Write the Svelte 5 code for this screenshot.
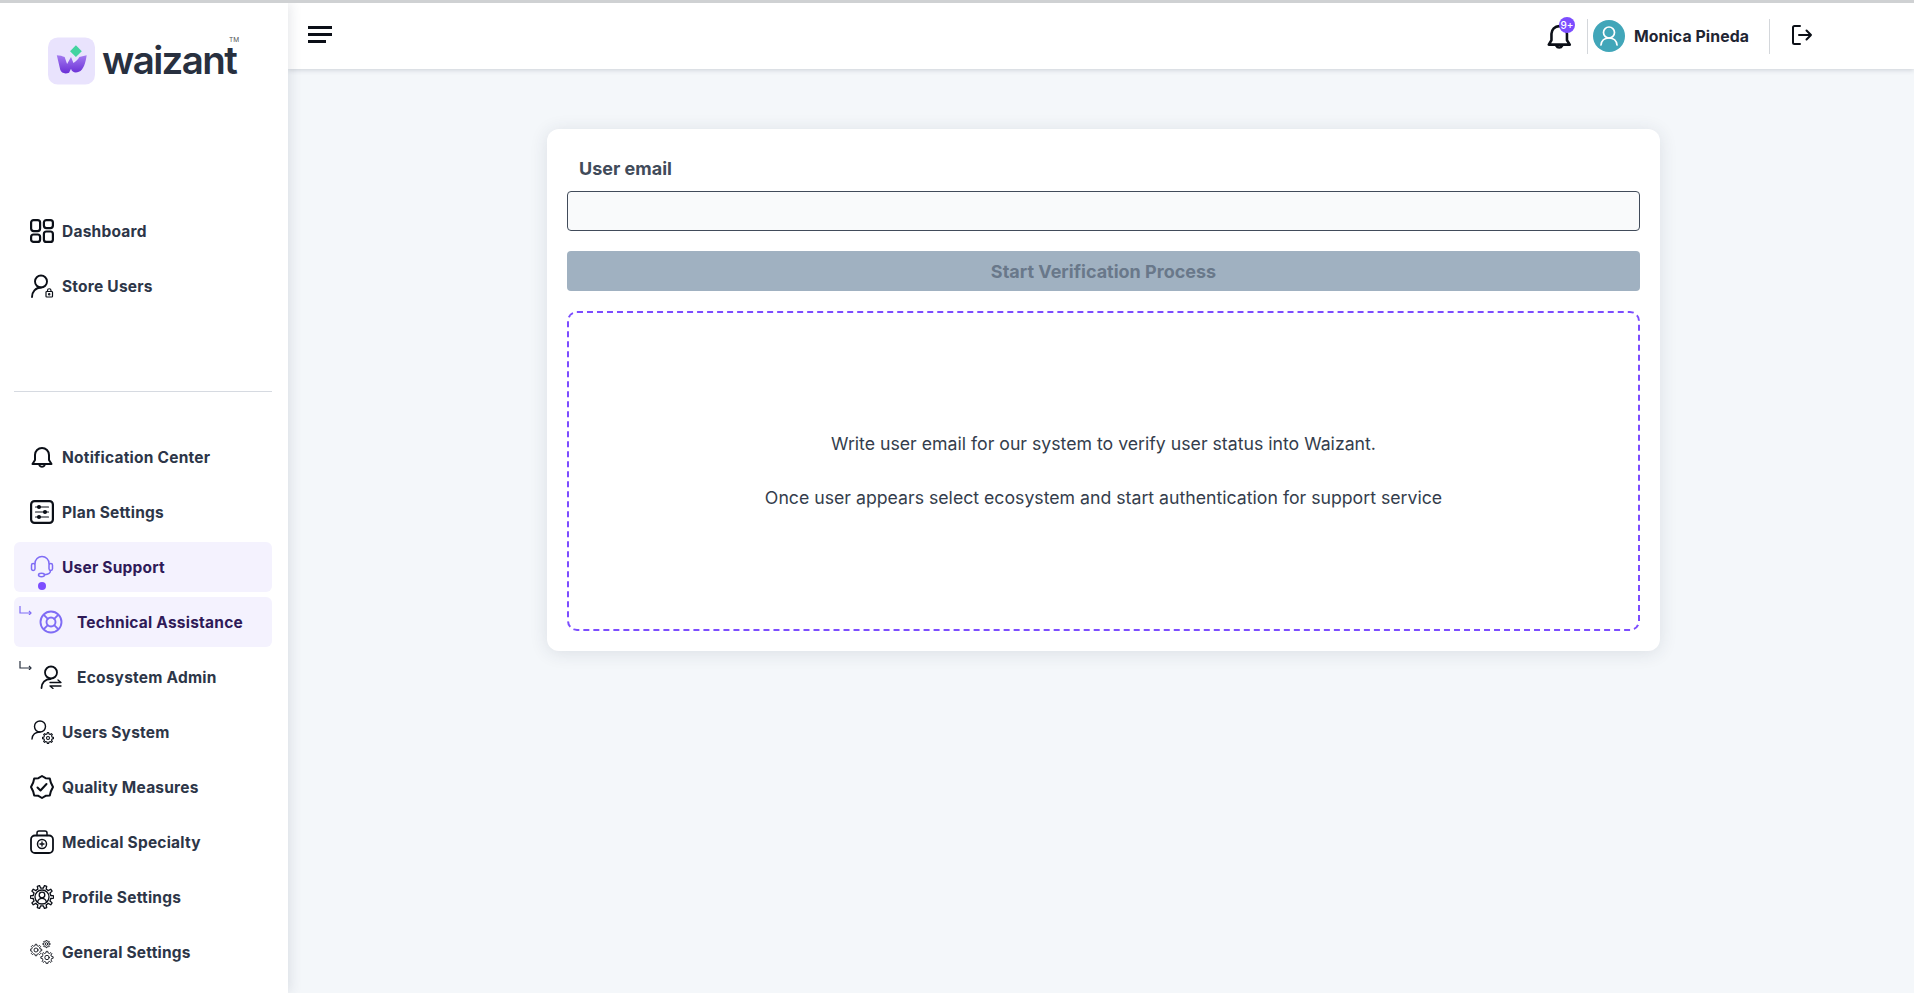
<script>
  const common = 'currentColor';
  const group1 = [
    { label: 'Dashboard', icon: 'dash' },
    { label: 'Store Users', icon: 'store' }
  ];
  const group2 = [
    { label: 'Notification Center', icon: 'bell' },
    { label: 'Plan Settings', icon: 'plan' },
    { label: 'User Support', icon: 'support', active: true, dot: true },
    { label: 'Technical Assistance', icon: 'life', active: true, sub: true },
    { label: 'Ecosystem Admin', icon: 'eco', sub: true },
    { label: 'Users System', icon: 'usergear' },
    { label: 'Quality Measures', icon: 'quality' },
    { label: 'Medical Specialty', icon: 'medical' },
    { label: 'Profile Settings', icon: 'profile' },
    { label: 'General Settings', icon: 'general' }
  ];

  // Outline of a cog with n teeth, centred on (cx, cy).
  function cog(cx, cy, r, n = 8) {
    const inner = r * 0.76;
    const pts = [];
    for (let i = 0; i < n; i++) {
      const step = (Math.PI * 2) / n;
      const a = i * step;
      [
        [inner, a - step * 0.5],
        [inner, a - step * 0.27],
        [r, a - step * 0.16],
        [r, a + step * 0.16],
        [inner, a + step * 0.27]
      ].forEach(([d, t]) => {
        pts.push(`${(cx + Math.cos(t) * d).toFixed(2)} ${(cy + Math.sin(t) * d).toFixed(2)}`);
      });
    }
    return `M${pts.join('L')}Z`;
  }
</script>

{#snippet icon(name)}
  <svg class="ico" viewBox="0 0 24 24" fill="none" stroke={common} stroke-width="1.5" stroke-linecap="round" stroke-linejoin="round">
    {#if name === 'dash'}
      <g stroke-width="2.200">
        <rect x="1.100" y="1.100" width="9" height="11" rx="2.500" />
        <rect x="13.900" y="1.100" width="9" height="8" rx="2.500" />
        <rect x="1.100" y="15.500" width="9" height="7.400" rx="2.500" />
        <rect x="13.900" y="12.500" width="9" height="10.400" rx="2.500" />
      </g>
    {:else if name === 'store'}
      <circle cx="11" cy="7.500" r="6" stroke-width="1.900" />
      <path d="M2 23c0-5 3.500-9.500 9-9.500" stroke-width="1.900" />
      <rect x="16" y="17.500" width="6.500" height="5.500" rx=".8" stroke-width="1.200" />
      <path d="M17.500 17.500v-1a1.700 1.700 0 0 1 3.500 0v1" stroke-width="1.200" />
      <circle cx="19.200" cy="20.200" r=".5" fill="currentColor" />
    {:else if name === 'bell'}
      <path d="M5 10a7 7 0 0 1 14 0v5l2.500 4h-19L5 15z" stroke-width="2" />
      <path d="M9.500 20.500a3 3 0 0 0 5 0" stroke-width="2" />
    {:else if name === 'plan'}
      <rect x="1.100" y="1.100" width="21.800" height="21.800" rx="3.500" stroke-width="2.200" />
      <path d="M5.500 7h13M5.500 12h13M5.500 17h13" stroke-width="1.200" />
      <circle cx="9" cy="7" r="1.300" fill="currentColor" />
      <circle cx="15" cy="12" r="1.300" fill="currentColor" />
      <circle cx="9" cy="17" r="1.300" fill="currentColor" />
    {:else if name === 'support'}
      <g stroke-width="1.500">
        <path d="M5 9V8.500a7 7 0 0 1 14 0V9" />
        <rect x="1.500" y="8.500" width="3.500" height="7" rx="1.700" />
        <rect x="19" y="8.500" width="3.500" height="7" rx="1.700" />
        <path d="M20.500 15.500c0 2.500-3 4-6 4.200" />
        <ellipse cx="11.500" cy="20" rx="3" ry="1.700" />
      </g>
    {:else if name === 'life'}
      <g stroke-width="1.900">
        <circle cx="12" cy="12" r="10.500" />
        <circle cx="12" cy="12" r="4.500" />
        <path d="M4.800 4.800l4 4M19.200 4.800l-4 4M4.800 19.200l4-4M19.200 19.200l-4-4" />
      </g>
    {:else if name === 'eco'}
      <circle cx="12" cy="7.500" r="6" stroke-width="1.800" />
      <path d="M2.500 23c0-5 3.500-9 9-9" stroke-width="1.800" />
      <path d="M11 17.500h11l-3-2.500M22 21H11l3 2.500" stroke-width="1.300" />
    {:else if name === 'usergear'}
      <circle cx="10" cy="6.500" r="5.500" stroke-width="1.400" />
      <path d="M2 19c.5-4.500 3.500-7 8-7" stroke-width="1.400" />
      <g stroke-width="1.100">
        <path d={cog(18, 18, 5.500)} />
        <circle cx="18" cy="18" r="1.500" />
      </g>
    {:else if name === 'quality'}
      <path d="M12 1l3.600 2.200 4.200.2 1 4.100L23 12l-2.200 4.500-1 4.100-4.200.2L12 23l-3.600-2.200-4.200-.2-1-4.100L1 12l2.200-4.500 1-4.100 4.200-.2z" stroke-width="2" />
      <path d="M7.500 12.500l3 3 6-6.500" stroke-width="2" />
    {:else if name === 'medical'}
      <rect x="1" y="5.500" width="22" height="17.500" rx="4" stroke-width="1.800" />
      <path d="M7 5.500V3a2 2 0 0 1 2-2h6a2 2 0 0 1 2 2v2.500" stroke-width="1.500" />
      <circle cx="12" cy="14" r="4.500" stroke-width="1.500" />
      <path d="M12 12v4M10 14h4" stroke-width="1.300" />
    {:else if name === 'profile'}
      <g stroke-width="1.300">
        <path d={cog(12, 12, 11.700, 10)} />
        <circle cx="12" cy="12" r="7" />
        <circle cx="12" cy="10" r="2.800" />
        <path d="M7.500 17c.8-2.600 2.500-3.700 4.500-3.700s3.700 1.100 4.500 3.700" />
      </g>
    {:else if name === 'general'}
      <g stroke-width=".9">
        <path d={cog(6, 10, 5.800)} />
        <circle cx="6" cy="10" r="2" />
        <path d={cog(17, 17.500, 6.200)} />
        <circle cx="17" cy="17.500" r="2.200" />
        <path d={cog(16.500, 4, 3.700)} />
        <circle cx="16.500" cy="4" r="1.300" />
      </g>
    {/if}
  </svg>
{/snippet}

{#snippet navItem(item)}
  <a class="item" class:active={item.active} class:sub={item.sub} href="#top">
    {#if item.sub}
      <svg class="corner" viewBox="0 0 13 9" fill="none" stroke="currentColor" stroke-width="1.200">
        <path d="M1 0v7h11" />
        <path d="M10 5l2 2-2 2" />
      </svg>
    {/if}
    <span class="icon-wrap">
      {@render icon(item.icon)}
      {#if item.dot}<span class="dot"></span>{/if}
    </span>
    <span class="label">{item.label}</span>
  </a>
{/snippet}

<div class="app" id="top">
  <aside class="sidebar">
    <div class="brand">
      <svg class="mark" viewBox="0 0 48 48" aria-hidden="true">
        <defs>
          <linearGradient id="wgrad" x1="0" y1="0" x2="0" y2="1">
            <stop offset="0" stop-color="#a47bf0" />
            <stop offset="1" stop-color="#6a2fd6" />
          </linearGradient>
        </defs>
        <rect width="48" height="48" rx="10" fill="#e9e3fd" />
        <path d="M28.500 8l6 6-6 6-6-6z" fill="#43d3a0" />
        <path d="M9 18c3 0 6 .8 8 2l2.500 7 4-7 2.500 6c3-2 5-4 6-6l7.500-2c-1 7-3 15-8 17-3 1.500-7 1-8-3l-2 4c-4 1.500-8 .5-9-3z" fill="url(#wgrad)" />
      </svg>
      <span class="wordmark">waizant</span>
      <span class="tm">TM</span>
    </div>

    <nav class="group first">
      {#each group1 as item}
        {@render navItem(item)}
      {/each}
    </nav>

    <hr class="divider" />

    <nav class="group">
      {#each group2 as item}
        {@render navItem(item)}
      {/each}
    </nav>
  </aside>

  <div class="right">
    <header class="topbar">
      <button class="burger" aria-label="Menu"><span></span><span></span><span class="short"></span></button>
      <div class="actions">
        <span class="bell">
          <svg viewBox="0 0 24 26" fill="none" stroke="#0b0f17" stroke-width="2.400" stroke-linejoin="round" stroke-linecap="round">
            <path d="M5 11a7.200 7.200 0 0 1 14.400 0v6l2.600 4H2.500L5 17z" />
            <path d="M9.500 22a3 3 0 0 0 5.400 0" />
          </svg>
          <span class="badge">9+</span>
        </span>
        <span class="vr first-vr"></span>
        <span class="avatar">
          <svg viewBox="0 0 32 32" fill="none" stroke="#fff" stroke-width="1.700" stroke-linecap="round">
            <circle cx="16" cy="12.500" r="5.500" />
            <path d="M8 25c.5-4.500 3.800-7 8-7s7.500 2.500 8 7" />
          </svg>
        </span>
        <span class="username">Monica Pineda</span>
        <span class="vr second-vr"></span>
        <svg class="logout" viewBox="0 0 22 22" fill="none" stroke="#0b0f17" stroke-width="2" stroke-linecap="round" stroke-linejoin="round">
          <path d="M9 2H3.500A1.500 1.500 0 0 0 2 3.500v15A1.500 1.500 0 0 0 3.500 20H9" />
          <path d="M8 11h12M15.500 6.500 20 11l-4.500 4.500" />
        </svg>
      </div>
    </header>

    <main class="main">
      <section class="card">
        <label class="field-label" for="email">User email</label>
        <input id="email" class="input" type="email" />
        <button class="submit" disabled>Start Verification Process</button>
        <div class="hint">
          <p>Write user email for our system to verify user status into Waizant.</p>
          <p>Once user appears select ecosystem and start authentication for support service</p>
        </div>
      </section>
    </main>
  </div>
</div>

<style>
  :global(body) {
    margin: 0;
    background: #f4f7fa;
  }
  .app {
    display: flex;
    height: 993px;
    box-sizing: border-box;
    border-top: 3px solid #cfd1d3;
    overflow: hidden;
    font-family: Inter, "Noto Sans", sans-serif;
    color: #29313f;
  }
  .sidebar {
    flex: 0 0 288px;
    width: 288px;
    background: #fff;
    box-sizing: border-box;
    padding: 0 16px 0 14px;
    position: relative;
    z-index: 2;
    box-shadow: 2px 0 12px rgba(40, 50, 70, 0.12);
  }
  .brand {
    display: flex;
    align-items: center;
    position: relative;
    height: 48px;
    margin: 34px 0 0 34px;
  }
  .mark {
    width: 47px;
    height: 48px;
    flex: none;
  }
  .wordmark {
    margin: -2px 0 0 7px;
    font-size: 38.500px;
    font-weight: 600;
    letter-spacing: -1.600px;
    color: #28303f;
    line-height: 36px;
  }
  .tm {
    position: absolute;
    left: 181px;
    top: 0;
    font-size: 6.500px;
    line-height: 6px;
    color: #555;
  }
  .group {
    display: flex;
    flex-direction: column;
    gap: 5px;
  }
  .group.first {
    margin-top: 121px;
  }
  .divider {
    border: 0;
    border-top: 1px solid #d6dae1;
    margin: 80px 0 40px;
  }
  .item {
    display: flex;
    align-items: center;
    position: relative;
    height: 50px;
    box-sizing: border-box;
    padding-left: 16px;
    border-radius: 6px;
    color: #2d3648;
    text-decoration: none;
    font-size: 15.500px;
    font-weight: 700;
    letter-spacing: 0.22px;
  }
  .item.active {
    background: #f4f2fe;
    color: #2f1a58;
  }
  .item.sub {
    padding-left: 25px;
  }
  .icon-wrap {
    position: relative;
    display: flex;
    width: 24px;
    height: 24px;
    margin-right: 8px;
    flex: none;
    color: #0b0f17;
  }
  .sub .icon-wrap {
    margin-right: 14px;
  }
  .active .icon-wrap {
    color: #7f6cf5;
  }
  .ico {
    width: 24px;
    height: 24px;
    display: block;
  }
  .dot {
    position: absolute;
    left: 7.500px;
    top: 27px;
    width: 8px;
    height: 8px;
    border-radius: 50%;
    background: #7c4dff;
  }
  .corner {
    position: absolute;
    left: 5px;
    top: 9px;
    width: 13px;
    height: 9px;
    color: #29313f;
  }
  .active .corner {
    color: #7f6cf5;
  }
  .right {
    flex: 1;
    display: flex;
    flex-direction: column;
    min-width: 0;
  }
  .topbar {
    display: flex;
    align-items: center;
    justify-content: space-between;
    height: 66px;
    box-sizing: border-box;
    background: #fff;
    padding: 0 0 0 20px;
    box-shadow: 0 1px 5px rgba(40, 50, 70, 0.2);
    position: relative;
    z-index: 1;
  }
  .burger {
    display: flex;
    flex-direction: column;
    gap: 4px;
    width: 24px;
    padding: 0;
    margin-top: -4px;
    border: 0;
    background: none;
  }
  .burger span {
    display: block;
    height: 3px;
    width: 24px;
    background: #0b0f17;
  }
  .burger span.short {
    width: 18px;
  }
  .actions {
    display: flex;
    align-items: center;
    margin-right: 101px;
  }
  .bell {
    position: relative;
    width: 26px;
    height: 28px;
    display: block;
    margin-right: 1px;
  }
  .bell svg {
    width: 26px;
    height: 28px;
    display: block;
  }
  .badge {
    position: absolute;
    left: 13px;
    top: -5px;
    width: 16px;
    height: 16px;
    border-radius: 50%;
    background: #7c4dff;
    color: #fff;
    font-size: 10px;
    font-weight: 500;
    line-height: 16px;
    text-align: center;
  }
  .vr {
    width: 1px;
    height: 35px;
    background: #d4d7db;
    display: block;
  }
  .first-vr {
    margin-left: 14px;
    margin-right: 5px;
  }
  .avatar {
    width: 32px;
    height: 32px;
    border-radius: 50%;
    background: #41a6b9;
    display: block;
  }
  .avatar svg {
    width: 32px;
    height: 32px;
    display: block;
  }
  .username {
    margin-left: 9px;
    font-size: 15.800px;
    font-weight: 700;
    letter-spacing: 0.1px;
    color: #1f2533;
  }
  .second-vr {
    margin-left: 20px;
    margin-right: 21px;
  }
  .logout {
    width: 22px;
    height: 22px;
    margin-top: -3px;
    display: block;
  }
  .main {
    flex: 1;
    padding: 60px 0 0 259px;
    background: #f4f7fa;
  }
  .card {
    width: 1113px;
    height: 522px;
    box-sizing: border-box;
    padding: 20px;
    background: #fff;
    border-radius: 12px;
    box-shadow: 0 2px 18px rgba(40, 50, 70, 0.12);
    display: flex;
    flex-direction: column;
  }
  .field-label {
    font-size: 18px;
    font-weight: 700;
    color: #414b5a;
    line-height: 24px;
    height: 42px;
    padding-left: 12px;
    box-sizing: border-box;
    display: block;
    padding-top: 8px;
  }
  .input {
    height: 40px;
    box-sizing: border-box;
    width: 100%;
    border: 1px solid #414b5a;
    border-radius: 4px;
    background: #f9fafb;
    outline: none;
  }
  .submit {
    height: 40px;
    margin-top: 20px;
    border: 0;
    border-radius: 4px;
    background: #a0b1c1;
    color: #69788a;
    font-family: inherit;
    font-size: 18px;
    font-weight: 700;
  }
  .hint {
    margin-top: 20px;
    flex: 1;
    border: 2px dashed #7c4dff;
    border-radius: 10px;
    display: flex;
    flex-direction: column;
    justify-content: center;
    align-items: center;
    gap: 30px;
    font-size: 17.700px;
    color: #343d4c;
  }
  .hint p {
    margin: 0;
    line-height: 24px;
  }
</style>
